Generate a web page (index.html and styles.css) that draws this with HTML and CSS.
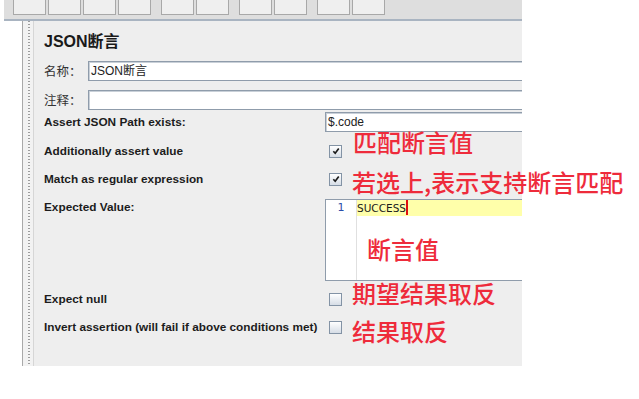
FILE: index.html
```html
<!doctype html>
<html lang="zh-CN">
<head>
  <link rel="stylesheet" href="styles.css">
  <meta charset="utf-8">
  <meta name="viewport" content="width=device-width, initial-scale=1">
  <title>JSON断言</title>
</head>
<body>
  <div class="window">
    <div class="toolbar">
      <div class="group">
        <span class="tool"></span><span class="tool"></span><span class="tool"></span><span class="tool"></span>
      </div>
      <div class="group">
        <span class="tool"></span><span class="tool"></span>
      </div>
      <div class="group">
        <span class="tool"></span><span class="tool"></span>
      </div>
      <div class="group">
        <span class="tool"></span><span class="tool"></span>
      </div>
    </div>

    <div class="main">
      <div class="gutter"></div>
      <div class="splitter"></div>
      <div class="panel">
        <h1 class="title">JSON断言</h1>

        <div class="row text first">
          <label class="label cn">名称：</label>
          <div class="field">JSON断言</div>
        </div>
        <div class="row text">
          <label class="label cn">注释：</label>
          <div class="field"></div>
        </div>
        <div class="row text tight">
          <label class="label">Assert JSON Path exists:</label>
          <div class="field">$.code</div>
        </div>

        <div class="row check gap5">
          <label class="label">Additionally assert value</label>
          <span class="box checked"><svg viewBox="0 0 9 9" width="8" height="8"><path d="M1.5 4.8 L3.6 7 L7.6 1.8" fill="none" stroke="#1b1b1b" stroke-width="1.9"/></svg></span>
        </div>
        <div class="row check">
          <label class="label">Match as regular expression</label>
          <span class="box checked"><svg viewBox="0 0 9 9" width="8" height="8"><path d="M1.5 4.8 L3.6 7 L7.6 1.8" fill="none" stroke="#1b1b1b" stroke-width="1.9"/></svg></span>
        </div>

        <div class="row area">
          <label class="label top">Expected Value:</label>
          <div class="editor">
            <div class="lines">1</div>
            <div class="code">
              <div class="code-line">SUCCESS<span class="caret"></span></div>
            </div>
          </div>
        </div>

        <div class="row check gap4">
          <label class="label">Expect null</label>
          <span class="box"></span>
        </div>
        <div class="row check">
          <label class="label">Invert assertion (will fail if above conditions met)</label>
          <span class="box"></span>
        </div>
      </div>
    </div>
  </div>

  <!-- red notes drawn over the screenshot -->
  <div class="note note-match">匹配断言值</div>
  <div class="note note-regex">若选上,表示支持断言匹配</div>
  <div class="note note-value">断言值</div>
  <div class="note note-null">期望结果取反</div>
  <div class="note note-invert">结果取反</div>
</body>
</html>
```

FILE: styles.css
```css
body{
  margin: 0;
  background: #ffffff;
  font-family: "Liberation Sans", Arial, sans-serif;
  color: #222222;
}

.window{
  width: 518px;
  margin-left: 4px;
}

.toolbar{
  height: 19px;
  background: #dedede;
  border-bottom: 2px solid #a9b4c1;
  display: flex;
  align-items: flex-start;
  gap: 10px;
  padding-left: 9px;
}

.group{
  display: flex;
  gap: 2px;
}

.tool{
  box-sizing: border-box;
  width: 33px;
  height: 15px;
  border: 1px solid #a8a8a8;
  border-top: none;
  background: #efefef;
}

.main{
  display: flex;
  height: 345px;
}

.gutter{
  width: 18px;
  background: #ffffff;
}

.splitter{
  box-sizing: border-box;
  width: 12px;
  border-left: 1px solid #a9a9a9;
  border-right: 1px solid #d6d6d6;
  background: repeating-linear-gradient(#9c9c9c 0 1px, #f4f4f4 1px 3px) 5px 0 / 2px 100% no-repeat, #f2f2f2;
}

.panel{
  flex: 1;
  background: #eeeeee;
  overflow: hidden;
  padding: 11px 0 0 10px;
}

.title{
  margin: 0;
  font: bold 16px/20px "Liberation Sans", "Noto Sans CJK SC", sans-serif;
  color: #1a1a1a;
}

.row{
  display: flex;
  align-items: center;
}

.row.text{
  height: 20px;
  margin-top: 9px;
}

.row.tight{
  margin-top: 2px;
}

.row.check{
  height: 28px;
}

.row.gap5{
  margin-top: 5px;
}

.row.gap4{
  margin-top: 4px;
}

.row.area{
  align-items: flex-start;
  margin-top: 6px;
}

.label{
  flex: none;
  width: 281px;
  font: bold 11.8px/16px "Liberation Sans", Arial, sans-serif;
  color: #1c1c1c;
}

.label.cn{
  width: 44px;
  font: 12.5px/16px "Noto Sans CJK SC", sans-serif;
  color: #333333;
}

.field{
  flex: 1;
  box-sizing: border-box;
  height: 20px;
  margin-right: -10px;
  padding-left: 2px;
  border: 1px solid #8f9cab;
  box-shadow: inset 1px 1px 0 #c9d0d8;
  background: #ffffff;
  font: 12px/18px "Liberation Sans", "Noto Sans CJK SC", sans-serif;
  color: #222222;
}

.box{
  box-sizing: border-box;
  width: 13px;
  height: 13px;
  margin-left: 4px;
  border: 1px solid #8393a5;
  background: linear-gradient(#ffffff, #d6dde6);
  display: flex;
  align-items: center;
  justify-content: center;
}

.editor{
  flex: 1;
  box-sizing: border-box;
  height: 82px;
  margin-right: -10px;
  border: 1px solid #8f9cab;
  background: #ffffff;
  display: flex;
}

.lines{
  width: 30px;
  border-right: 1px solid #e0e0e0;
  text-align: center;
  font: 11px/16px "DejaVu Sans", sans-serif;
  color: #2b4ea8;
}

.code{
  flex: 1;
}

.code-line{
  height: 16px;
  background: #ffffaa;
  font: 10.5px/16px "DejaVu Sans", sans-serif;
  color: #1a1a1a;
}

.caret{
  display: inline-block;
  width: 2px;
  height: 15px;
  vertical-align: top;
  background: #e01010;
}

.note{
  position: absolute;
  font: 500 24px/20px "Noto Sans CJK SC", sans-serif;
  color: #ee2b3b;
  white-space: nowrap;
}

.note-match{
  left: 353px;
  top: 132px;
}

.note-regex{
  left: 352px;
  top: 172px;
}

.note-value{
  left: 367px;
  top: 239px;
}

.note-null{
  left: 352px;
  top: 283px;
}

.note-invert{
  left: 352px;
  top: 321px;
}
```
